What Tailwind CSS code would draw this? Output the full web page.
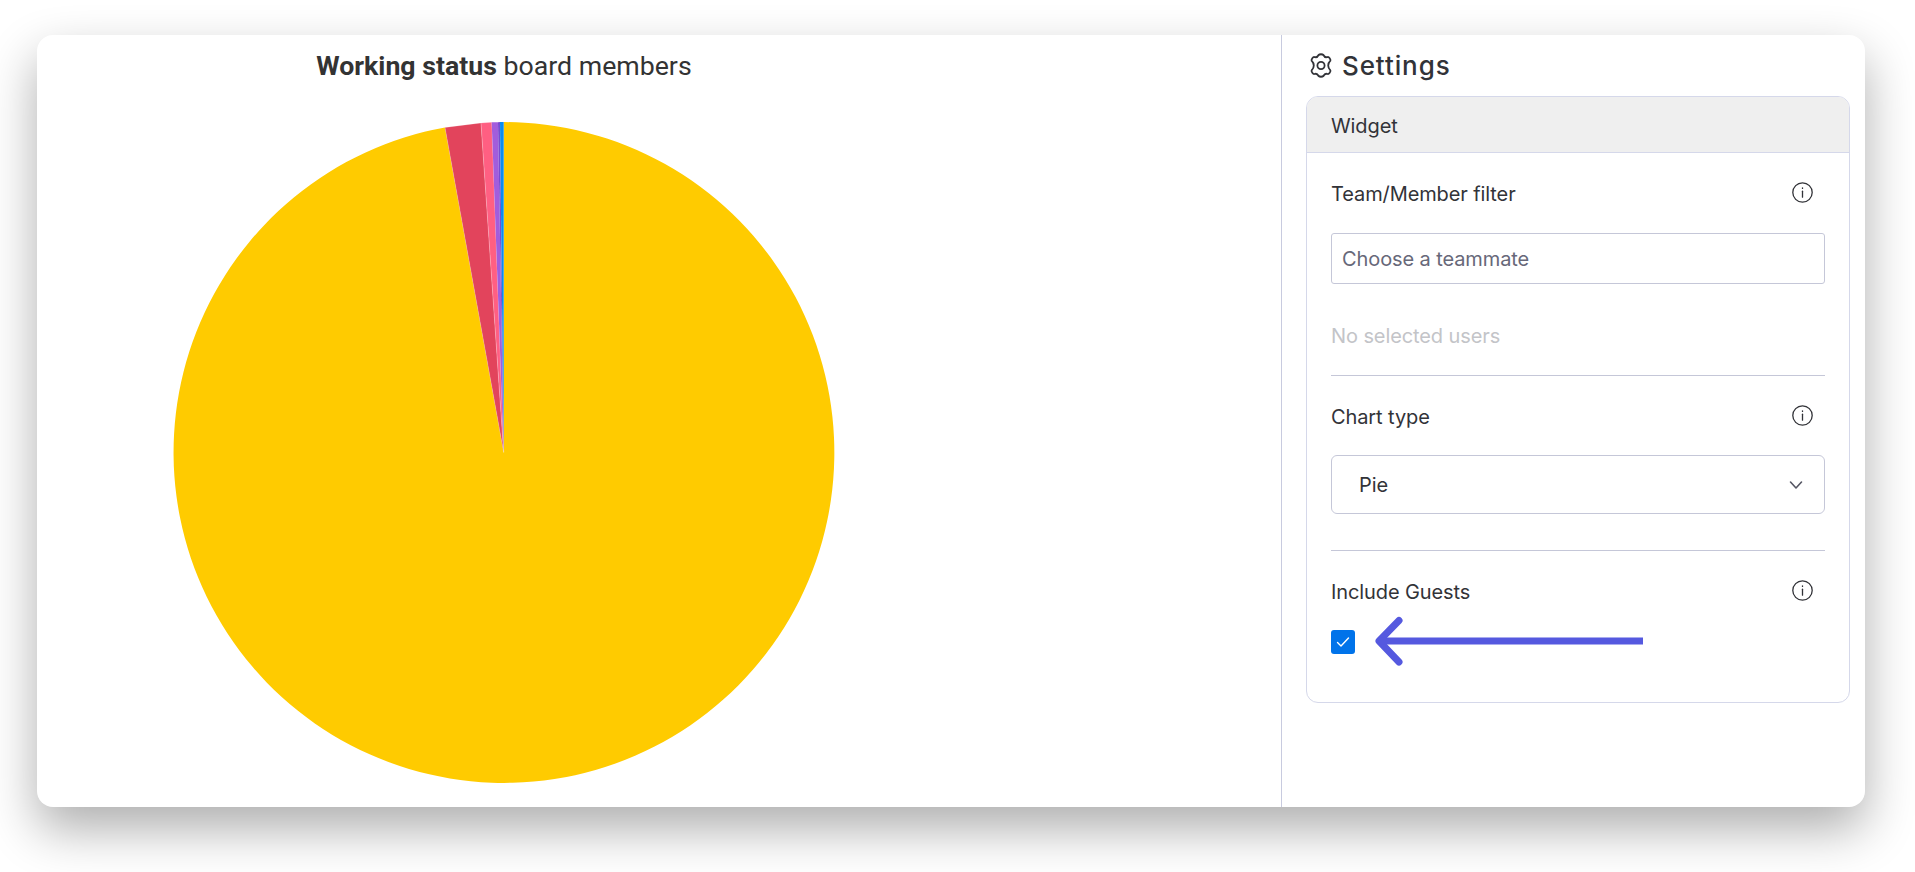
<!DOCTYPE html>
<html lang="en">
<head>
    <meta charset="UTF-8">
    <title>Working status board members</title>
    <script src="https://cdn.jsdelivr.net/npm/@tailwindcss/browser@4"></script>
</head>
<body class="bg-white h-[872px] overflow-hidden pt-[35px] pl-[37px] font-['Inter',sans-serif] text-[#323338]">

    <div class="flex w-[1828px] h-[772px] bg-white rounded-[16px] shadow-[0_22px_50px_rgba(0,0,0,0.32)] overflow-hidden">

        <!-- Chart -->
        <div class="w-[1245px] border-r border-[#c8cbdf]">
            <div class="w-[934px] h-[86px] pt-[16px] text-center font-['Roboto',sans-serif] text-[26.7px] leading-[30px] text-[#333333]">
                <span class="font-bold">Working status</span> board members
            </div>
            <svg class="ml-[136px]" width="662" height="662" viewBox="0 0 662 662">
                <path d="M330.7 331.5 L330.7 1.1 A330.4 330.4 0 1 1 272 6.4 Z" fill="#ffcb00"/>
                <path d="M330.7 331.5 L272 6.4 L308 1.9 Z" fill="#e2445c" stroke="#ffffff" stroke-opacity="0.3" stroke-width="0.6"/>
                <path d="M330.7 331.5 L308 1.9 L318.7 1.3 Z" fill="#ff5f82" stroke="#ffffff" stroke-opacity="0.3" stroke-width="0.6"/>
                <path d="M330.7 331.5 L318.7 1.3 L325 1.15 Z" fill="#a25ddc"/>
                <path d="M330.7 331.5 L325 1.15 L327 1.12 Z" fill="#784bd1"/>
                <path d="M330.7 331.5 L327 1.12 L330.7 1.1 Z" fill="#0a8cf0"/>
            </svg>
        </div>

        <!-- Settings -->
        <div class="flex-1 pl-[24px] pr-[15px]">
            <div class="flex items-center gap-[10px] h-[61px] pl-[4px] text-[26px] tracking-[0.9px] leading-[30px] font-medium">
                <svg class="w-[22px] h-[25px]" viewBox="0 0 22 25" fill="none" stroke="#323338" stroke-width="1.8" stroke-linecap="round" stroke-linejoin="round">
                    <path d="M8.6 2 C9.6 1 12.4 1 13.4 2 C14.3 3.8 15.6 4.8 17.6 4 C19 3.6 20.8 6.4 20.4 7.6 C19 9 18.2 11 18.2 12.5 C18.2 14 19 16 20.4 17.4 C20.8 18.6 19 21.4 17.6 21 C15.6 20.2 14.3 21.2 13.4 23 C12.4 24 9.6 24 8.6 23 C7.7 21.2 6.4 20.2 4.4 21 C3 21.4 1.2 18.6 1.6 17.4 C3 16 3.8 14 3.8 12.5 C3.8 11 3 9 1.6 7.6 C1.2 6.4 3 3.6 4.4 4 C6.4 4.8 7.7 3.8 8.6 2 Z"/>
                    <circle cx="11" cy="12.5" r="3.6"/>
                </svg>
                <span>Settings</span>
            </div>

            <div class="w-[544px] h-[607px] border-[1.5px] border-[#d5d8ea] rounded-[12px] overflow-hidden text-[20px] tracking-[-0.1px]">
                <div class="h-[56px] px-[24px] pt-[2px] flex items-center bg-[#efefef] border-b-[1.5px] border-[#d5d8ea]">Widget</div>

                <div class="px-[24px]">
                    <!-- Team filter -->
                    <div class="flex items-center justify-between h-[80px] pt-[2px]">
                        <span>Team/Member filter</span>
                        <svg class="mr-[12px] mb-[3px] w-[21px] h-[21px]" viewBox="0 0 21 21" fill="none" stroke="#323338" stroke-width="1.3" stroke-linecap="round">
                            <circle cx="10.5" cy="10.5" r="9.7"/>
                            <path d="M10.5 9.2v6"/>
                            <path d="M10.5 5.8v.6"/>
                        </svg>
                    </div>
                    <div class="h-[51px] flex items-center pl-[10px] border-[1.5px] border-[#c5c7d8] rounded-[3px] text-[#676879]">Choose a teammate</div>
                    <div class="h-[92px] pt-[12px] flex items-center border-b-[1.5px] border-[#c5c7d8] text-[#c3c4c8]">No selected users</div>

                    <!-- Chart type -->
                    <div class="flex items-center justify-between h-[79px] pt-[2px]">
                        <span>Chart type</span>
                        <svg class="mr-[12px] mb-[3px] w-[21px] h-[21px]" viewBox="0 0 21 21" fill="none" stroke="#323338" stroke-width="1.3" stroke-linecap="round">
                            <circle cx="10.5" cy="10.5" r="9.7"/>
                            <path d="M10.5 9.2v6"/>
                            <path d="M10.5 5.8v.6"/>
                        </svg>
                    </div>
                    <div class="h-[59px] flex items-center justify-between pl-[27px] pr-[21px] border-[1.5px] border-[#c5c7d8] rounded-[6px]">
                        <span>Pie</span>
                        <svg class="w-[14px] h-[10px]" viewBox="0 0 14 10" fill="none" stroke="#555663" stroke-width="1.6" stroke-linecap="round" stroke-linejoin="round">
                            <path d="M1.5 2 L7 8 L12.5 2"/>
                        </svg>
                    </div>
                    <div class="h-[37px] border-b-[1.5px] border-[#c5c7d8]"></div>

                    <!-- Include guests -->
                    <div class="flex items-center justify-between h-[79px] pt-[2px]">
                        <span>Include Guests</span>
                        <svg class="mr-[12px] mb-[3px] w-[21px] h-[21px]" viewBox="0 0 21 21" fill="none" stroke="#323338" stroke-width="1.3" stroke-linecap="round">
                            <circle cx="10.5" cy="10.5" r="9.7"/>
                            <path d="M10.5 9.2v6"/>
                            <path d="M10.5 5.8v.6"/>
                        </svg>
                    </div>
                    <div class="relative">
                        <div class="w-[24px] h-[24px] flex items-center justify-center rounded-[3px] bg-[#0073ea]">
                            <svg class="w-[14px] h-[12px]" viewBox="0 0 14 12" fill="none" stroke="#ffffff" stroke-width="1.4" stroke-linecap="round" stroke-linejoin="round">
                                <path d="M1.5 6.5 L5 10 L12.5 2"/>
                            </svg>
                        </div>
                        <!-- annotation arrow over the panel -->
                        <svg class="absolute left-[44px] top-[-16px]" width="272" height="56" viewBox="0 0 272 56" fill="none" stroke="#5559df" stroke-width="7" stroke-linecap="round" stroke-linejoin="round">
                            <path d="M24 6.5 L4 27 L24 48"/>
                            <path d="M4 27 H268" stroke-linecap="butt"/>
                        </svg>
                    </div>
                </div>
            </div>
        </div>
    </div>

</body>
</html>
